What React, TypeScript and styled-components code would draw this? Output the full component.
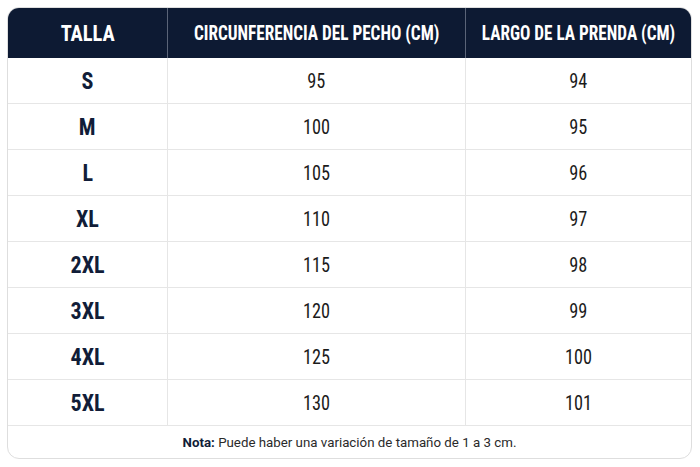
import React from "react";
import styled, { createGlobalStyle } from "styled-components";

const Global = createGlobalStyle`
  html, body { margin: 0; padding: 0; background: #ffffff; }
  body { width: 700px; height: 467px; overflow: hidden; }
`;

const Page = styled.div`
  padding: 7px 8px 0 7px;
`;

const Card = styled.div`
  width: 685px;
  box-sizing: border-box;
  border: 1px solid #dedede;
  border-radius: 12px;
  overflow: hidden;
  background: #ffffff;
`;

const Grid = styled.div`
  display: grid;
  grid-template-columns: 160px 298px 1fr;
`;

const Narrow = styled.span<{ $scale: number }>`
  display: inline-block;
  white-space: nowrap;
  transform: scaleX(${(p) => p.$scale});
  transform-origin: center;
`;

const HeadCell = styled.div<{ $last?: boolean; $size: number }>`
  height: 50px;
  background: #0d1a33;
  color: #ffffff;
  display: flex;
  align-items: center;
  justify-content: center;
  font-family: "Roboto Condensed", Roboto, sans-serif;
  font-weight: 700;
  font-size: ${(p) => p.$size}px;
  border-right: ${(p) => (p.$last ? "none" : "1px solid #5a6478")};
  white-space: nowrap;
`;

const SizeCell = styled.div`
  height: 46px;
  box-sizing: border-box;
  border-right: 1px solid #e6e6e6;
  border-bottom: 1px solid #e6e6e6;
  display: flex;
  align-items: center;
  justify-content: center;
  font-family: "Roboto Condensed", Roboto, sans-serif;
  font-weight: 700;
  font-size: 24px;
  color: #111d38;
`;

const ValueCell = styled.div<{ $last?: boolean }>`
  height: 46px;
  box-sizing: border-box;
  border-right: ${(p) => (p.$last ? "none" : "1px solid #e6e6e6")};
  border-bottom: 1px solid #e6e6e6;
  display: flex;
  align-items: center;
  justify-content: center;
  font-family: "Roboto Condensed", Roboto, sans-serif;
  font-size: 21px;
  color: #1b1b1b;
`;

const Note = styled.div`
  height: 32px;
  display: flex;
  align-items: center;
  justify-content: center;
  font-family: Roboto, "Liberation Sans", sans-serif;
  font-size: 13.3px;
  color: #2a2a2a;
  b { color: #111d38; font-weight: 700; }
`;

const rows: [string, number, number][] = [
  ["S", 95, 94],
  ["M", 100, 95],
  ["L", 105, 96],
  ["XL", 110, 97],
  ["2XL", 115, 98],
  ["3XL", 120, 99],
  ["4XL", 125, 100],
  ["5XL", 130, 101],
];

export default function App() {
  return (
    <>
      <Global />
      <Page>
        <Card>
          <Grid>
            <HeadCell $size={22.5}>
              <Narrow $scale={0.91}>TALLA</Narrow>
            </HeadCell>
            <HeadCell $size={20}>
              <Narrow $scale={0.86}>CIRCUNFERENCIA DEL PECHO (CM)</Narrow>
            </HeadCell>
            <HeadCell $size={20} $last>
              <Narrow $scale={0.86}>LARGO DE LA PRENDA (CM)</Narrow>
            </HeadCell>
            {rows.map(([s, c, l]) => (
              <React.Fragment key={s}>
                <SizeCell>
                  <Narrow $scale={0.92}>{s}</Narrow>
                </SizeCell>
                <ValueCell>
                  <Narrow $scale={0.87}>{c}</Narrow>
                </ValueCell>
                <ValueCell $last>
                  <Narrow $scale={0.87}>{l}</Narrow>
                </ValueCell>
              </React.Fragment>
            ))}
          </Grid>
          <Note>
            <span>
              <b>Nota:</b> Puede haber una variación de tamaño de 1 a 3 cm.
            </span>
          </Note>
        </Card>
      </Page>
    </>
  );
}
